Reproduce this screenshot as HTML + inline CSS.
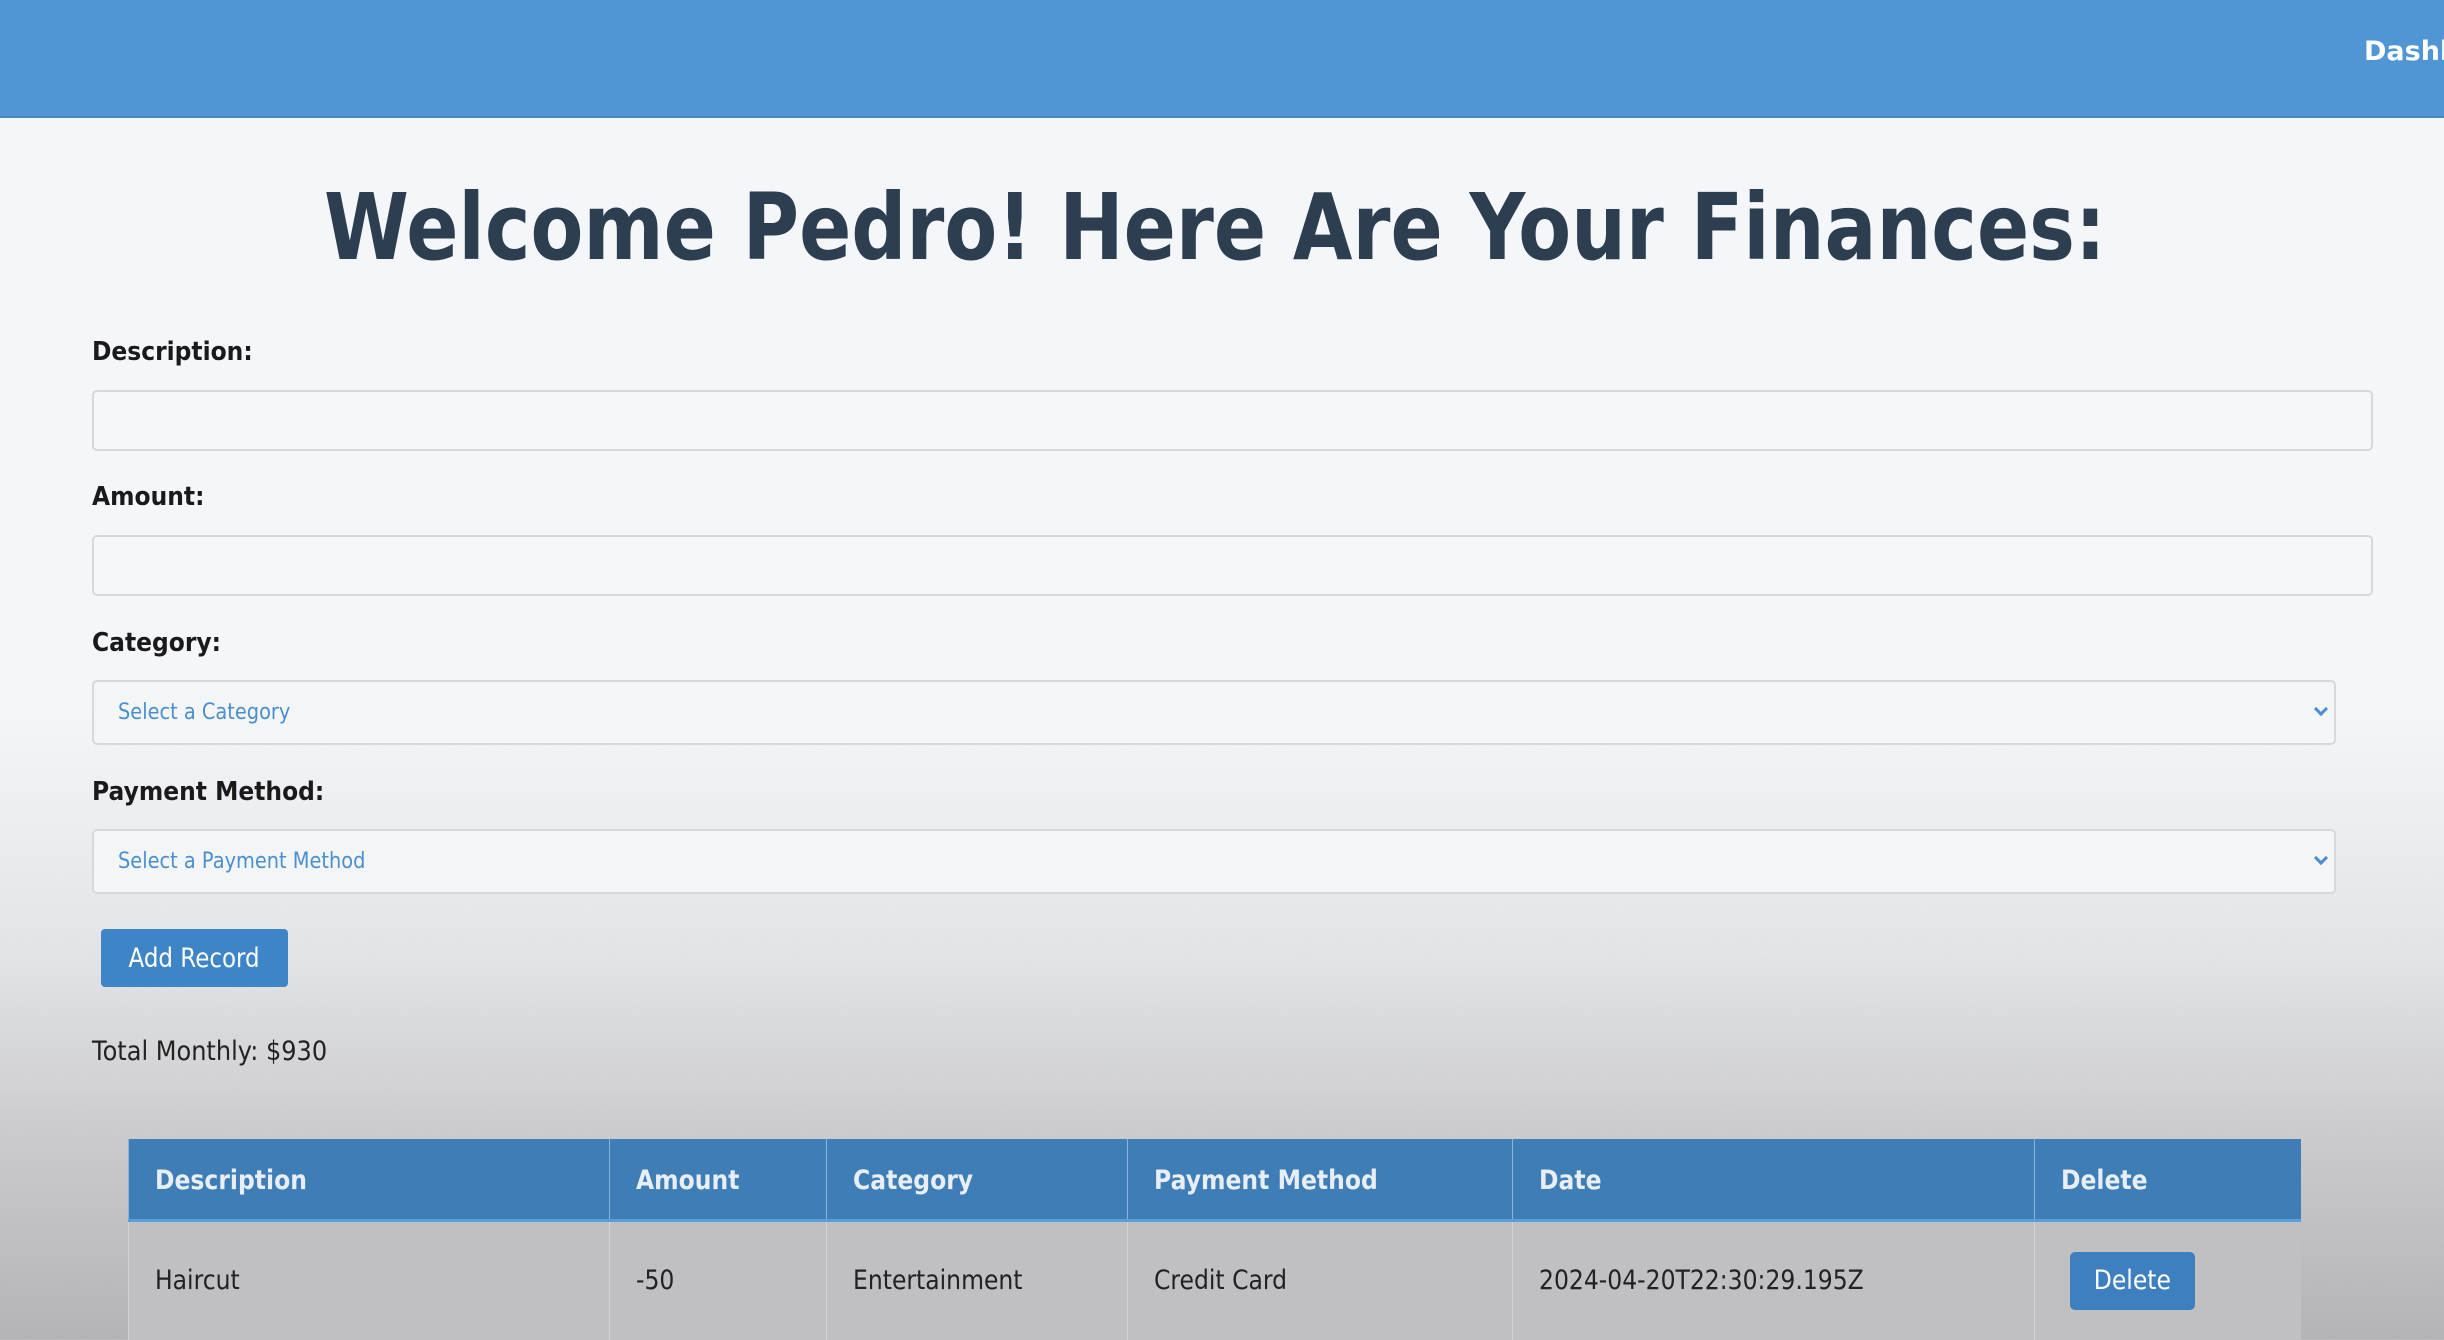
<!DOCTYPE html>
<html><head><meta charset="utf-8"><style>
*{box-sizing:border-box;margin:0;padding:0}
html,body{width:2444px;height:1340px;overflow:hidden}
body{font-family:"DejaVu Sans","Liberation Sans",sans-serif;background:linear-gradient(#f4f6f9 0px,#f4f6f9 700px,#e3e4e7 950px,#c9c9cb 1150px,#b4b4b6 1340px);position:relative;color:#222}
.hdr{position:absolute;left:0;top:0;width:2444px;height:118px;background:#5096d4;border-bottom:2px solid #4a88c0}
.dash{position:absolute;left:2364px;top:36px;color:#fff;font-weight:bold;font-size:27px;white-space:nowrap}
h1{position:absolute;left:324px;top:174px;font-size:92px;color:#2c3e50;font-weight:bold;white-space:nowrap;transform-origin:0 0;transform:scaleX(0.837)}
.lbl{position:absolute;left:92px;font-weight:bold;font-size:26px;color:#1a1a1a;transform-origin:0 0;transform:scaleX(0.9);white-space:nowrap}
.inp{position:absolute;left:92px;width:2281px;height:61px;border:2px solid #d6d8dc;border-radius:5px;background:#f6f7f9}
.sel{position:absolute;left:92px;width:2244px;height:65px;border:2px solid #d6d8dc;border-radius:5px;background:#f4f5f7;color:#4a8fd0;font-size:22px}
.sel span{position:absolute;left:24px;top:18px;transform-origin:0 0;transform:scaleX(0.88);white-space:nowrap}
.sel i{position:absolute;right:8px;top:22px;width:10px;height:10px;border-right:3px solid #4a8fd0;border-bottom:3px solid #4a8fd0;transform:rotate(45deg)}
.btn{position:absolute;left:101px;top:929px;width:187px;height:58px;background:#3d85c6;border-radius:4px;color:#fff;font-size:27px;text-align:center;line-height:60px}
.btn span{display:inline-block;transform:scaleX(0.85)}
.tot{position:absolute;left:92px;top:1036px;font-size:27px;color:#222;transform-origin:0 0;transform:scaleX(0.89);white-space:nowrap}
table{position:absolute;left:128px;top:1139px;width:2173px;border-collapse:collapse}
th{background:#3f7db6;color:#e8eef5;height:81px;text-align:left;font-size:27px;padding-left:26px;border-left:1px solid #8ab4dd;border-bottom:3px solid #5aa0d8;padding-top:4px}
td{background:#c0c0c2;height:120px;font-size:27px;padding-left:26px;border-left:1px solid #d4d4d6;vertical-align:top;padding-top:43px;color:#222}
th span,td span{display:inline-block;transform-origin:0 50%;transform:scaleX(0.87);white-space:nowrap}
.del{display:inline-block;background:#3d7fbf;color:#fff;width:125px;height:58px;border-radius:5px;text-align:center;line-height:58px;margin-left:19px;margin-top:-14px}
.del span{transform-origin:50% 50%}
</style></head><body>
<div class="hdr"><div class="dash">Dashb</div></div>
<h1>Welcome Pedro! Here Are Your Finances:</h1>
<div class="lbl" style="top:337px">Description:</div>
<div class="inp" style="top:390px"></div>
<div class="lbl" style="top:482px">Amount:</div>
<div class="inp" style="top:535px"></div>
<div class="lbl" style="top:628px">Category:</div>
<div class="sel" style="top:680px"><span>Select a Category</span><i></i></div>
<div class="lbl" style="top:777px">Payment Method:</div>
<div class="sel" style="top:829px"><span>Select a Payment Method</span><i></i></div>
<div class="btn"><span>Add Record</span></div>
<div class="tot">Total Monthly: $930</div>
<table>
<tr><th style="width:481px"><span>Description</span></th><th style="width:217px"><span>Amount</span></th><th style="width:301px"><span>Category</span></th><th style="width:385px"><span>Payment Method</span></th><th style="width:522px"><span>Date</span></th><th><span>Delete</span></th></tr>
<tr><td><span>Haircut</span></td><td><span>-50</span></td><td><span>Entertainment</span></td><td><span>Credit Card</span></td><td><span>2024-04-20T22:30:29.195Z</span></td><td style="padding-left:16px"><div class="del"><span>Delete</span></div></td></tr>
</table>
</body></html>
